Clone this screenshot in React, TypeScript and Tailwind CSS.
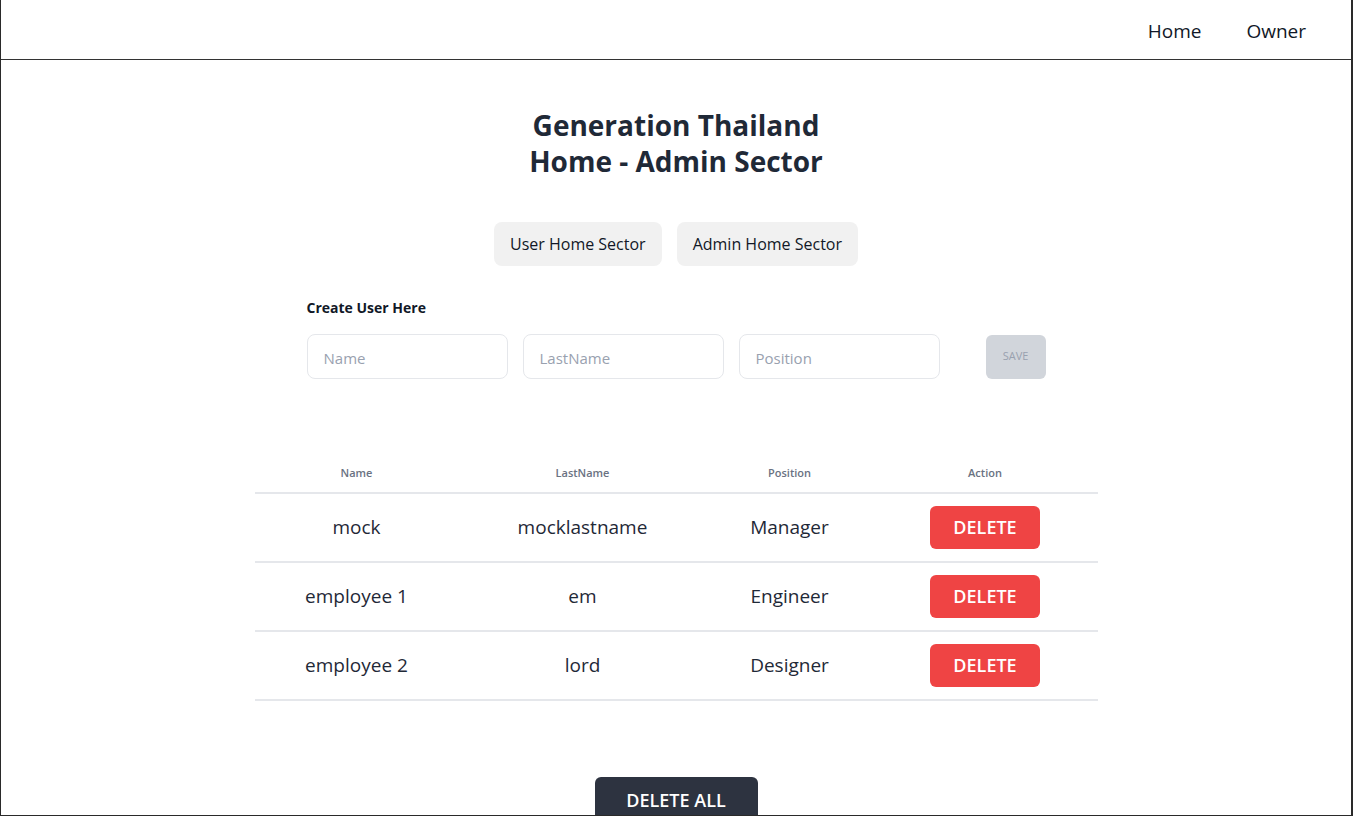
const users = [
  { name: 'mock', lastname: 'mocklastname', position: 'Manager' },
  { name: 'employee 1', lastname: 'em', position: 'Engineer' },
  { name: 'employee 2', lastname: 'lord', position: 'Designer' },
]

const cols = 'grid grid-cols-[204px_248px_166px_225px]'

export default function App() {
  return (
    <div
      className="h-[816px] overflow-hidden border-l border-b border-r-2 border-[#2a2a2a] bg-white text-[#1f2937]"
      style={{ fontFamily: '"Open Sans", "Noto Sans", sans-serif' }}
    >
      <nav className="flex h-[60px] items-center justify-end gap-[45px] border-b border-[#333] pr-[45px] pt-1">
        <a href="/" className="text-[19px] font-medium text-[#111827]">Home</a>
        <a href="/owner" className="text-[19px] font-medium text-[#111827]">Owner</a>
      </nav>

      <div className="flex flex-col items-center">
        <h1 className="mt-[47px] text-center text-[28px] font-bold leading-[36px] text-[#1f2937]">
          Generation Thailand
          <br />
          Home - Admin Sector
        </h1>

        <div className="mt-[43px] flex gap-[15px]">
          <button className="h-[44px] rounded-lg bg-[#f1f1f1] px-4 text-[16px] font-medium text-[#111827]">
            User Home Sector
          </button>
          <button className="h-[44px] rounded-lg bg-[#f1f1f1] px-4 text-[16px] font-medium text-[#111827]">
            Admin Home Sector
          </button>
        </div>

        <div className="mt-[32px] w-[739px]">
          <p className="text-[14px] font-bold leading-5 text-[#111827]">Create User Here</p>
          <div className="mt-4 flex items-center">
            <input placeholder="Name" className="h-[45px] w-[201px] rounded-lg border border-gray-200 px-4 pt-[3px] text-[15px] placeholder:text-gray-400" />
            <input placeholder="LastName" className="ml-[15px] h-[45px] w-[201px] rounded-lg border border-gray-200 px-4 pt-[3px] text-[15px] placeholder:text-gray-400" />
            <input placeholder="Position" className="ml-[15px] h-[45px] w-[201px] rounded-lg border border-gray-200 px-4 pt-[3px] text-[15px] placeholder:text-gray-400" />
            <button disabled className="ml-[46px] h-[44px] w-[60px] rounded-md bg-[#d1d5db] text-[11px] text-gray-400">
              SAVE
            </button>
          </div>
        </div>

        <div className="mt-[86px] w-[843px]">
          <div className={`${cols} border-b-2 border-gray-200 pb-[10px] text-center text-[11px] font-semibold text-gray-500`}>
            <div>Name</div>
            <div>LastName</div>
            <div>Position</div>
            <div>Action</div>
          </div>
          {users.map((u) => (
            <div key={u.name} className={`${cols} h-[69px] items-center border-b-2 border-gray-200 text-center text-[19px] text-[#1f2937]`}>
              <div>{u.name}</div>
              <div>{u.lastname}</div>
              <div>{u.position}</div>
              <div className="flex justify-center">
                <button className="h-[43px] w-[110px] rounded-md bg-[#ef4444] text-[18px] font-semibold text-white">
                  DELETE
                </button>
              </div>
            </div>
          ))}
        </div>

        <button className="mt-[76px] h-[48px] w-[163px] shrink-0 rounded-md bg-[#2d3340] text-[18px] font-semibold text-white">
          DELETE ALL
        </button>
      </div>
    </div>
  )
}
